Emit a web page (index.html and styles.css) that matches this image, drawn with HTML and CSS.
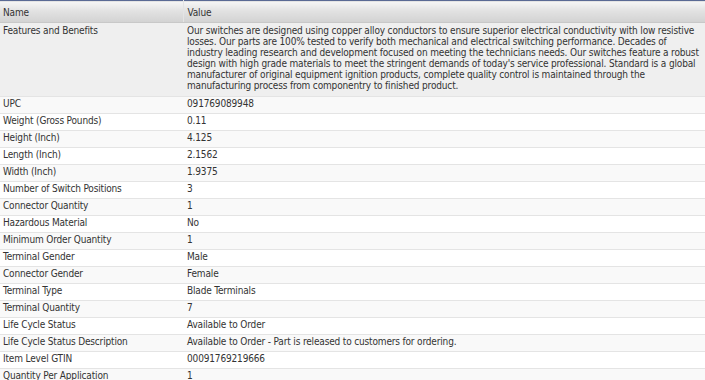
FILE: index.html
```html
<!DOCTYPE html>
<html>
<head>
<meta charset="utf-8">
<link rel="stylesheet" href="styles.css">
</head>
<body>
<table class="grid">
  <colgroup><col class="c-name"><col class="c-value"></colgroup>
  <thead>
    <tr><th>Name</th><th>Value</th></tr>
  </thead>
  <tbody>
    <tr class="long"><td>Features and Benefits</td><td>Our switches are designed using copper alloy conductors to ensure superior electrical conductivity with low resistive losses. Our parts are 100% tested to verify both mechanical and electrical switching performance. Decades of industry leading research and development focused on meeting the technicians needs. Our switches feature a robust design with high grade materials to meet the stringent demands of today's service professional. Standard is a global manufacturer of original equipment ignition products, complete quality control is maintained through the manufacturing process from componentry to finished product.</td></tr>
    <tr><td>UPC</td><td>091769089948</td></tr>
    <tr><td>Weight (Gross Pounds)</td><td>0.11</td></tr>
    <tr><td>Height (Inch)</td><td>4.125</td></tr>
    <tr><td>Length (Inch)</td><td>2.1562</td></tr>
    <tr><td>Width (Inch)</td><td>1.9375</td></tr>
    <tr><td>Number of Switch Positions</td><td>3</td></tr>
    <tr><td>Connector Quantity</td><td>1</td></tr>
    <tr><td>Hazardous Material</td><td>No</td></tr>
    <tr><td>Minimum Order Quantity</td><td>1</td></tr>
    <tr><td>Terminal Gender</td><td>Male</td></tr>
    <tr><td>Connector Gender</td><td>Female</td></tr>
    <tr><td>Terminal Type</td><td>Blade Terminals</td></tr>
    <tr><td>Terminal Quantity</td><td>7</td></tr>
    <tr><td>Life Cycle Status</td><td>Available to Order</td></tr>
    <tr><td>Life Cycle Status Description</td><td>Available to Order - Part is released to customers for ordering.</td></tr>
    <tr><td>Item Level GTIN</td><td>00091769219666</td></tr>
    <tr><td>Quantity Per Application</td><td>1</td></tr>
  </tbody>
</table>
</body>
</html>
```
FILE: styles.css
```css
html, body {
  margin: 0;
  padding: 0;
  background: #fff;
}
.grid {
  width: 705px;
  border-collapse: collapse;
  table-layout: fixed;
  font-family: "DejaVu Sans Condensed", "DejaVu Sans", sans-serif;
  font-stretch: condensed;
  font-size: 10px;
  letter-spacing: -0.16px;
  color: #333;
  border-top: 1px solid #5a6a94;
}
.c-name { width: 183px; }
.grid th {
  height: 19px;
  padding: 2px 4px 0;
  text-align: left;
  font-weight: normal;
  color: #333;
  background: linear-gradient(#f6f6f6, #e2e2e2 45%, #d2d2d2);
  border-bottom: 1px solid #c8c8c8;
  border-left: 1px solid #e4e4e4;
  vertical-align: middle;
}
.grid th:first-child { border-left: none; padding-left: 3px; }
.grid td {
  height: 14px;
  padding: 0 1px 2px 4px;
  line-height: 12px;
  vertical-align: middle;
  border-bottom: 1px solid #e4e4e4;
  white-space: nowrap;
}
.grid td:first-child { padding-left: 3px; }
.grid tr.long td {
  background: #efefef;
  vertical-align: top;
  line-height: 11px;
  padding-top: 2px;
  padding-bottom: 5px;
  white-space: normal;
}
.grid tbody tr:nth-child(even) td { background: #f9f9f9; }
```
